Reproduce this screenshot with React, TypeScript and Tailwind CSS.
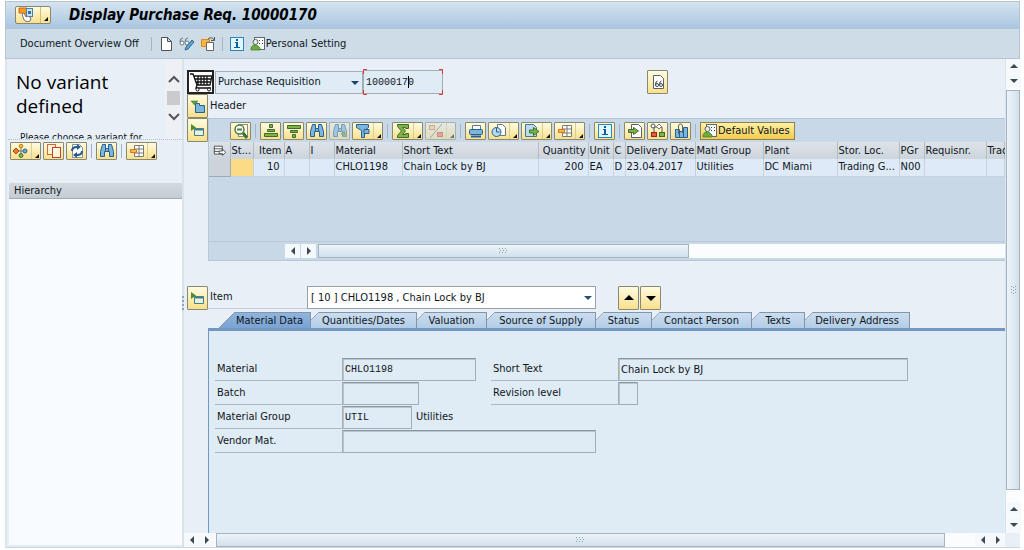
import React from "react";
import clsx from "clsx";

type IconName =
  | "session" | "page" | "glasses" | "copy" | "info" | "person" | "hier" | "dup" | "refresh" | "find" | "layout"
  | "cart" | "collapse" | "expand" | "doc" | "zoom" | "asc" | "desc" | "findNext" | "filter" | "sum" | "subtotal"
  | "print" | "views" | "export" | "assign" | "split" | "capacity" | "up" | "down" | "config";

const outline = { stroke: "#3e6b35", strokeWidth: 1, fill: "#7fb342" };
const blue = { stroke: "#27608f", strokeWidth: 1, fill: "#7cb6df" };

const binoculars = (
  <path {...blue} d="M3.500 1.500h3v4h3v-4h3l2 7v5h-4v-5h-5v5h-4v-5z M6.500 5.500v3M9.500 5.500v3" />
);

const icons: Record<IconName, React.ReactNode> = {
  session: (
    <>
      <path d="M1 1h8v4l-2 1v3l-3-3H1z" fill="#f39a1f" stroke="#c8641a" strokeWidth="1" />
      <rect x="8.500" y="1.500" width="6" height="8" fill="#cfe3f2" stroke="#4583ae" />
      <path d="M10 4h3v3h-3z" fill="#2774ad" />
      <path d="M4 7l2 6q3 3 6 1l1-3-3-2-2 1-2-4z" fill="#fff" stroke="#777" />
    </>
  ),
  page: <path d="M3.500 1.500h6l4 4v9h-10z M9.500 1.500v4h4" fill="#fff" stroke="#4d5357" />,
  glasses: (
    <>
      <path d="M1 6q0-4 3-4M6 6q0-4 3-4" fill="none" stroke="#68747b" />
      <circle cx="3" cy="7" r="2" fill="#fff" stroke="#68747b" />
      <circle cx="8" cy="7" r="2" fill="#fff" stroke="#68747b" />
      <path d="M6 14l1-3 6-7 2 2-6 7z" fill="#60a5d5" stroke="#2a6796" />
    </>
  ),
  copy: (
    <>
      <path d="M1.500 3.500h8v7h-8z" fill="#f6b63a" stroke="#e28919" />
      <path d="M6.500 6.500h7v8h-7z" fill="#fff" stroke="#666" />
      <path d="M8 3q4-3 6 1M14.500 1v3.500H11" fill="none" stroke="#555" />
    </>
  ),
  info: (
    <>
      <rect x="1.500" y="1.500" width="13" height="13" fill="#e5f5fd" stroke="#2388c4" />
      <path d="M7 3h2v2H7zM6 6h3v5h2v1H5v-1h2V7H6z" fill="#075f9c" />
    </>
  ),
  person: (
    <>
      <rect x="4.500" y="1.500" width="10" height="12" fill="#f8fafa" stroke="#60686c" />
      <path d="M9 4.500h1M12 4.500h1M9 7.500h1M12 7.500h1" stroke="#444" />
      <circle cx="5.500" cy="6" r="2.500" fill="#e9eee8" stroke="#586760" />
      <path d="M1 14v-2q1-3 4-3t5 3v2z" fill="#6fac3e" stroke="#397432" strokeWidth=".7" />
    </>
  ),
  hier: (
    <>
      <path d="M8 4v8M5 8h6" stroke="#777" />
      <path d="M3 5l3 3-3 3-3-3z" fill="#ed7a28" stroke="#a94616" />
      <circle cx="8" cy="3" r="1.800" fill="#f8c13c" stroke="#bd7b18" />
      <circle cx="12" cy="8" r="2" fill="#67a9d4" stroke="#28638f" />
      <circle cx="8" cy="12.500" r="2" fill="#83b64b" stroke="#437731" />
    </>
  ),
  dup: (
    <>
      <rect x="1.500" y="1.500" width="8" height="10" fill="#fff4d3" stroke="#d6673c" />
      <rect x="6.500" y="4.500" width="8" height="10" fill="#fff9dc" stroke="#c63e2c" />
    </>
  ),
  refresh: (
    <>
      <path d="M3.500 1.500h7l3 3v10h-10z" fill="#fff" stroke="#8a9297" />
      <path d="M3 8q0-4 5-4M13 8q0 4-5 4" fill="none" stroke="#245a93" strokeWidth="2" />
      <path d="M8 1l4 3-4 3zM8 9l-4 3 4 3z" fill="#245a93" />
    </>
  ),
  find: binoculars,
  findNext: (
    <>
      {binoculars}
      <path d="M9 11h6M12 8v6" stroke="#5c8a33" strokeWidth="2" />
    </>
  ),
  layout: (
    <>
      <path d="M5.500 2.500h9v11h-9zM5.500 6h9M5.500 10h9M10 2.500v11" fill="#fff" stroke="#777b75" />
      <path d="M1.500 6.500h6v3h-6z" fill="#f9b64e" stroke="#da7424" />
    </>
  ),
  cart: (
    <>
      <path d="M1 2h3l4 11h13l2-9H5M6 7h16M7 10h14M9 4v9M12 4v9M15 4v9M18 4v9M8 13l-1 3h15" fill="none" stroke="#111" strokeWidth="1.300" />
      <circle cx="8.500" cy="17.500" r="1.500" fill="#fff" stroke="#111" />
      <circle cx="20" cy="17.500" r="1.500" fill="#fff" stroke="#111" />
    </>
  ),
  collapse: (
    <>
      <path d="M5.500 5.500h4v2h5v7h-9z" {...blue} />
      <path d="M1 3h7L4.500 7z" fill="#5c9a35" stroke="#397432" strokeWidth=".5" />
    </>
  ),
  expand: (
    <>
      <path d="M4.500 6.500h9v7h-9z" fill="#e8f3dc" stroke="#467e8c" />
      <path d="M4 7.500h10" stroke="#467e8c" strokeWidth="2" />
      <path d="M1 2l5 3.500L1 9z" fill="#4e8d35" />
    </>
  ),
  doc: (
    <>
      <path d="M3.500 1.500h7l3 3v10h-10z" fill="#fff" stroke="#586167" />
      <path d="M5.500 11q0-4 2-4M9.500 11q0-4 2-4" fill="none" stroke="#40494e" />
      <circle cx="7" cy="11" r="1.500" fill="none" stroke="#40494e" />
      <circle cx="11" cy="11" r="1.500" fill="none" stroke="#40494e" />
    </>
  ),
  zoom: (
    <>
      <rect x="5.500" y="1.500" width="9" height="12" fill="#fffbe7" stroke="#86908a" />
      <path d="M10 10l4 5" stroke="#3d702c" strokeWidth="3" />
      <circle cx="6.500" cy="6.500" r="4.500" fill="#fff" stroke="#4c8136" strokeWidth="1.500" />
      <path d="M4 6.500h5" stroke="#567b55" strokeWidth="2" />
    </>
  ),
  asc: <path {...outline} d="M6.500 1.500h3v3h-3zM4.500 6.500h7v2h-7zM1.500 10.500h13v3h-13z" />,
  desc: <path {...outline} d="M1.500 2.500h13v3h-13zM4.500 7.500h7v2h-7zM6.500 11.500h3v3h-3z" />,
  filter: (
    <>
      <path {...blue} d="M1.500 1.500h12v3l-4 3v7h-3v-7l-5-3z" />
      <path d="M9 6.500h5v4H9z" {...blue} />
    </>
  ),
  sum: <path {...outline} d="M2.500 1.500h11v4h-3v-1h-3l3 3.500-3 3.500h3v-1h3v4h-11v-2l4-4.500-4-4.500z" />,
  subtotal: (
    <>
      <path d="M14 1L2 15" stroke="#777" />
      <rect x="1.500" y="2.500" width="5" height="4" fill="#fbd6a0" stroke="#e3732e" />
      <rect x="9.500" y="9.500" width="5" height="4" fill="#ef7a52" stroke="#c3452a" />
    </>
  ),
  print: (
    <>
      <path d="M4.500 2.500h8v4h-8z" fill="#fff" stroke="#557d97" />
      <rect x="1.500" y="6.500" width="13" height="5" rx="1" {...blue} />
      <path d="M3 13.500h10" stroke="#27608f" strokeWidth="2" />
    </>
  ),
  views: (
    <>
      <path d="M6.500 1.500h5l3 3v8h-8z" fill="#fff" stroke="#657783" />
      <circle cx="5.500" cy="9" r="4.500" fill="#b8d9ed" stroke="#27608f" />
      <path d="M5.500 5v4h3" fill="none" stroke="#27608f" />
    </>
  ),
  export: (
    <>
      <path d="M1.500 1.500h8l3 3v9h-11z" fill="#b9dcf1" stroke="#447493" />
      <path d="M5.500 7h4V4.500l5.500 4-5.500 4V10h-4z" fill="#79b245" stroke="#397432" />
    </>
  ),
  assign: (
    <>
      <path d="M4.500 1.500h7l3 3v10h-10z" fill="#fff" stroke="#586167" />
      <path d="M1.500 6.500h5v-2l5 3.500-5 3.500v-2h-5z" {...outline} />
    </>
  ),
  split: (
    <>
      <path d="M4 4h8v5M4 4v6" fill="none" stroke="#555" />
      <circle cx="3" cy="3" r="2" fill="#fff" stroke="#555" />
      <path d="M9 1l2.500 2.500L9 6 6.500 3.500z" fill="#fff" stroke="#777" />
      <rect x="1.500" y="9.500" width="5" height="4" fill="#e35b39" stroke="#922b1a" />
      <rect x="9.500" y="9.500" width="5" height="4" {...outline} />
    </>
  ),
  capacity: (
    <>
      <path d="M2.500 6.500h4v8h-4zM6.500 8.500h4v6h-4zM10.500 4.500h4v10h-4z" {...blue} />
      <path d="M5.500 11V3q0-2 2-2t2 2v7" fill="none" stroke="#666" />
    </>
  ),
  up: <path d="M3 10h10L8 5z" fill="#000" />,
  down: <path d="M3 6h10l-5 5z" fill="#000" />,
  config: (
    <>
      <path d="M1.500 2.500h9v9h-9zM1.500 5.500h9M1.500 8.500h9" fill="#fff" stroke="#3c4348" />
      <path d="M7 8h4V6l3.500 3.500L11 13v-2H7z" fill="#fff" stroke="#3c4348" />
    </>
  ),
};

function Icon({ name, className = "size-4" }: { name: IconName; className?: string }) {
  return (
    <svg viewBox={name === "cart" ? "0 0 24 20" : "0 0 16 16"} className={clsx("shrink-0", className)} aria-hidden="true">
      {icons[name]}
    </svg>
  );
}

const yellow = "border border-[#8b8870] bg-linear-to-b from-[#fffbe0] to-[#f8e08a]";

function ToolButton({ icon, label, menu, disabled, tall }: { icon: IconName; label: string; menu?: boolean; disabled?: boolean; tall?: boolean }) {
  return (
    <button
      type="button"
      aria-label={label}
      disabled={disabled}
      className={clsx("flex shrink-0 items-center rounded-[1px]", yellow, menu ? "w-[31px] pl-0.5" : "w-[21px] justify-center", tall ? "h-6" : "h-[18px]", disabled && "opacity-50")}
    >
      <Icon name={icon} />
      {menu && (
        <span className="ml-0.5 flex h-full flex-1 items-end justify-end border-l border-[#d9cd93] p-px">
          <svg viewBox="0 0 4 4" className="size-1" aria-hidden="true"><path d="M4 0v4H0z" fill="#111" /></svg>
        </span>
      )}
    </button>
  );
}

function Sep({ className = "mx-0.5" }: { className?: string }) {
  return <span className={clsx("h-3.5 w-px shrink-0 bg-[#a3b5c4]", className)} />;
}

function Arrow({ dir, className }: { dir: "left" | "right" | "up" | "down"; className?: string }) {
  const d = { left: "M7 1v8L3 5z", right: "M3 1v8l4-4z", up: "M1 7h8L5 3z", down: "M1 3h8L5 7z" }[dir];
  return (
    <button type="button" aria-label={"Scroll " + dir} className={clsx("flex shrink-0 items-center justify-center bg-[#f6f9fc]", className ?? "h-3.5 w-[15px]")}>
      <svg viewBox="0 0 10 10" className="size-2.5" aria-hidden="true"><path d={d} fill="#3d4a55" /></svg>
    </button>
  );
}

function Grip({ vertical }: { vertical?: boolean }) {
  return (
    <svg viewBox="0 0 8 6" className={clsx("h-1.5 w-2", vertical && "rotate-90")} aria-hidden="true">
      <path d="M0 .5h8M1 2.500h8M0 4.500h8" stroke="#8fa0b0" strokeDasharray="1 2" />
    </svg>
  );
}

const columns = [
  { head: "", value: "", w: "w-[21px]" },
  { head: "St...", value: "", w: "w-[23px]" },
  { head: "Item", value: "10", w: "w-[31px]", right: true },
  { head: "A", value: "", w: "w-[25px]" },
  { head: "I", value: "", w: "w-[25px]" },
  { head: "Material", value: "CHLO1198", w: "w-[68px]" },
  { head: "Short Text", value: "Chain Lock by BJ", w: "w-[136px]" },
  { head: "Quantity", value: "200", w: "w-[50px]", right: true },
  { head: "Unit", value: "EA", w: "w-[25px]" },
  { head: "C", value: "D", w: "w-[12px]" },
  { head: "Delivery Date", value: "23.04.2017", w: "w-[70px]" },
  { head: "Matl Group", value: "Utilities", w: "w-[68px]" },
  { head: "Plant", value: "DC Miami", w: "w-[74px]" },
  { head: "Stor. Loc.", value: "Trading G...", w: "w-[62px]" },
  { head: "PGr", value: "N00", w: "w-[25px]" },
  { head: "Requisnr.", value: "", w: "w-[62px]" },
  { head: "Trac", value: "", w: "w-auto" },
];

const tabs = [
  { label: "Material Data", w: "w-[92px]" },
  { label: "Quantities/Dates", w: "w-[106px]" },
  { label: "Valuation", w: "w-[70px]" },
  { label: "Source of Supply", w: "w-[109px]" },
  { label: "Status", w: "w-[56px]" },
  { label: "Contact Person", w: "w-[100px]" },
  { label: "Texts", w: "w-[53px]" },
  { label: "Delivery Address", w: "w-[105px]" },
];

function Tab({ label, w, active }: { label: string; w: string; active: boolean }) {
  return (
    <button type="button" role="tab" aria-selected={active} className={clsx("flex h-4 shrink-0 whitespace-nowrap", w)}>
      <svg viewBox="0 0 16 16" preserveAspectRatio="none" className={clsx("h-4 shrink-0", active ? "w-4" : "w-2")} aria-hidden="true">
        <defs>
          <linearGradient id={active ? "edgeOn" : "edgeOff"} x2="0" y2="1">
            <stop stopColor={active ? "#8fb3dc" : "#cbddef"} />
            <stop offset="1" stopColor={active ? "#7ba3d2" : "#b3cde7"} />
          </linearGradient>
        </defs>
        <path d={active ? "M0 16L16 0v16z" : "M0 16V8L16 0v16z"} fill={active ? "url(#edgeOn)" : "url(#edgeOff)"} />
        <path d={active ? "M0 16L16 0" : "M0 8L16 0"} stroke="#8296ab" />
      </svg>
      <span
        className={clsx(
          "flex h-4 flex-1 items-center justify-center border-t border-r border-[#8296ab] bg-linear-to-b",
          active ? "from-[#8fb3dc] to-[#7ba3d2] pr-1.5" : "from-[#cbddef] to-[#b3cde7] pr-2",
        )}
      >
        {label}
      </span>
    </button>
  );
}

function Field({ id, label, value = "", w, mono, after, span }: { id: string; label: string; value?: string; w: string; mono?: boolean; after?: string; span?: boolean }) {
  return (
    <>
      <label htmlFor={id} className="flex h-6 items-center border-b border-[#a9b8c4] pl-0.5">{label}</label>
      <div className={clsx("flex h-6 items-center", span && "col-span-3")}>
        <input
          id={id}
          readOnly
          defaultValue={value}
          className={clsx("h-[23px] border border-[#a3adb5] border-t-[#8d979f] bg-[#dfebf5] px-0.5 shadow-[inset_1px_1px_0_#b9c4cc] outline-none", w, mono && "font-['Liberation_Mono',monospace] text-[10px]")}
        />
        {after && <span className="ml-1">{after}</span>}
      </div>
    </>
  );
}

export default function App() {
  return (
    <div className="flex min-h-screen flex-col bg-white pt-px pr-1 pb-0.5 pl-[5px] font-['DejaVu_Sans_Condensed','DejaVu_Sans',sans-serif] text-[11px] leading-4 text-[#10161c]">
      <header className="flex h-7 shrink-0 items-center gap-[18px] border border-[#b3c4d4] bg-linear-to-b from-[#d5e3ef] to-[#aac7e1] pl-[9px]">
        <button type="button" aria-label="Session menu" className={clsx("flex h-[18px] w-9 items-center rounded-[2px] pl-0.5", yellow)}>
          <Icon name="session" />
          <span className="ml-1.5 flex h-full flex-1 items-end justify-end border-l border-[#cfc079] p-0.5">
            <svg viewBox="0 0 4 4" className="size-1" aria-hidden="true"><path d="M4 0v4H0z" fill="#111" /></svg>
          </span>
        </button>
        <h1 className="text-[15px] leading-5 font-bold text-black italic">Display Purchase Req. 10000170</h1>
      </header>

      <div className="flex h-[30px] shrink-0 items-center gap-[5px] border-x border-b border-[#b3c4d4] bg-[#cddce7] pl-3.5">
        <button type="button" className="mr-1.5">Document Overview Off</button>
        <Sep className="mx-px" />
        <button type="button" aria-label="Create"><Icon name="page" /></button>
        <button type="button" aria-label="Display/Change"><Icon name="glasses" /></button>
        <button type="button" aria-label="Other Purchase Requisition"><Icon name="copy" /></button>
        <Sep className="mx-px" />
        <button type="button" aria-label="Help"><Icon name="info" /></button>
        <button type="button" className="flex items-center"><Icon name="person" />Personal Setting</button>
      </div>

      <div className="flex flex-1 border-b border-[#ccd5de] bg-[#e8eff7]">
        <aside className="flex w-[177px] shrink-0 flex-col border-l-2 border-[#dde5ec] pl-px">
          <div className="flex h-[81px] border-b border-dotted border-[#b6c2cc]">
            <div className="flex-1 overflow-hidden pt-[11px] pl-2">
              <h2 className="font-['Open_Sans',sans-serif] text-[19px] leading-6 text-black">No variant defined</h2>
              <p className="pt-3 pl-1 text-[10px] whitespace-nowrap">Please choose a variant for</p>
            </div>
            <div className="flex w-[17px] flex-col items-center bg-[#edf1f5] pt-4">
              <svg viewBox="0 0 12 8" className="h-2 w-3" aria-hidden="true"><path d="M1 7l5-5 5 5" fill="none" stroke="#555" strokeWidth="2" /></svg>
              <span className="my-2 h-3.5 w-[13px] bg-[#cbcbcd]" />
              <svg viewBox="0 0 12 8" className="h-2 w-3" aria-hidden="true"><path d="M1 1l5 5 5-5" fill="none" stroke="#555" strokeWidth="2" /></svg>
            </div>
          </div>
          <div className="flex h-[43px] items-start gap-0.5 pt-0.5 pl-0.5">
            <ToolButton icon="hier" label="Select variant" menu />
            <ToolButton icon="dup" label="Copy" />
            <ToolButton icon="refresh" label="Refresh" />
            <Sep className="mx-0.5 mt-0.5" />
            <ToolButton icon="find" label="Find" />
            <Sep className="mx-0.5 mt-0.5" />
            <ToolButton icon="layout" label="Change layout" menu />
          </div>
          <div className="ml-px h-4 border-b border-[#9faab4] bg-linear-to-b from-[#d2d9df] to-[#c5cdd4] pl-[5px]">Hierarchy</div>
          <div className="ml-px flex-1 border-b-2 border-[#e3eaf0] bg-[#f8fbff]" />
        </aside>
        <div className="flex w-0.5 shrink-0 items-center bg-[#dbe3ea]">
          <span className="h-3.5 border-l-2 border-dotted border-[#8fa0b0]" />
        </div>

        <div className="flex min-w-0 flex-1 flex-col">
          <div className="flex flex-1">
            <main className="flex min-w-0 flex-1 flex-col pt-[11px]">
              <div className="flex h-6 items-center pl-[3px]">
                <button type="button" aria-label="Shop" className="flex h-6 w-[27px] items-center justify-center border-2 border-[#222] bg-white"><Icon name="cart" className="h-5 w-6" /></button>
                <div className="relative ml-px">
                  <select aria-label="Document type" className="block h-[23px] w-[148px] appearance-none border border-[#a3adb5] bg-[#dfebf5] pl-0.5 outline-none">
                    <option>Purchase Requisition</option>
                  </select>
                  <svg viewBox="0 0 8 4" className="pointer-events-none absolute top-2.5 right-1 h-1 w-2" aria-hidden="true"><path d="M0 0h8L4 4z" fill="#20406a" /></svg>
                </div>
                <div className="relative">
                  <input aria-label="Requisition number" readOnly defaultValue="10000170" className="block h-6 w-20 border border-[#a3adb5] bg-[#dfebf5] pl-0.5 font-['Liberation_Mono',monospace] text-[10px] outline-none" />
                  <svg viewBox="0 0 80 26" preserveAspectRatio="none" className="pointer-events-none absolute -top-px left-0 h-[26px] w-20" aria-hidden="true">
                    <path d="M4 .5H.5V5M76 .5h3.500V5M4 25.500H.5V21M76 25.500h3.500V21" fill="none" stroke="#e2352f" />
                    <path d="M45.500 7v12" stroke="#000" />
                  </svg>
                </div>
                <div className="ml-[204px]"><ToolButton icon="doc" label="Services" tall /></div>
              </div>
              <div className="flex h-6 items-center gap-0.5 pl-[3px]">
                <ToolButton icon="collapse" label="Expand header" tall />
                <span>Header</span>
              </div>

              <div className="flex items-start pl-[3px]">
                <ToolButton icon="expand" label="Collapse item overview" tall />
                <section className="min-w-0 flex-1 overflow-hidden border-y border-l border-[#b5c7d8] bg-[#c8d8e7]">
                  <div className="flex h-[23px] items-center gap-0.5 pl-[21px]">
                    <ToolButton icon="zoom" label="Details" />
                    <Sep />
                    <ToolButton icon="asc" label="Sort ascending" />
                    <ToolButton icon="desc" label="Sort descending" />
                    <ToolButton icon="find" label="Find" />
                    <ToolButton icon="findNext" label="Find next" disabled />
                    <ToolButton icon="filter" label="Filter" menu />
                    <Sep />
                    <ToolButton icon="sum" label="Total" menu />
                    <ToolButton icon="subtotal" label="Subtotal" menu disabled />
                    <Sep />
                    <ToolButton icon="print" label="Print" />
                    <ToolButton icon="views" label="Views" menu />
                    <ToolButton icon="export" label="Export" menu />
                    <ToolButton icon="layout" label="Change layout" menu />
                    <Sep />
                    <ToolButton icon="info" label="Information" />
                    <Sep />
                    <ToolButton icon="assign" label="Assign source" />
                    <ToolButton icon="split" label="Release" />
                    <ToolButton icon="capacity" label="Stock" />
                    <Sep />
                    <button type="button" className="flex h-[18px] items-center border border-[#8b8050] bg-linear-to-b from-[#fff0a0] to-[#f3cb4c] pr-1 pl-px whitespace-nowrap"><Icon name="person" />Default Values</button>
                  </div>
                  <div className="h-[99px]">
                    <table className="w-full table-fixed border-collapse">
                      <thead>
                        <tr className="h-[17px] bg-linear-to-b from-[#dde3e8] to-[#ccd4dc]">
                          {columns.map((c, i) => (
                            <th key={i} scope="col" className={clsx("h-[17px] border-r border-[#b0bcc8] py-0 font-normal whitespace-nowrap", c.w, c.right ? "pr-0.5 text-right" : "pl-px text-left")}>
                              {i === 0 ? <Icon name="config" className="mx-auto size-3.5" /> : c.head}
                            </th>
                          ))}
                        </tr>
                      </thead>
                      <tbody>
                        <tr className="bg-[#deeaf7]">
                          {columns.map((c, i) => (
                            <td
                              key={i}
                              className={clsx(
                                "h-[17px] overflow-hidden border-r border-b py-0 whitespace-nowrap",
                                c.right ? "pr-1 text-right" : "pl-px",
                                i === 0 ? "border-[#9faab4] bg-[#ccd3da]" : "border-[#c5d3e0]",
                                i === 1 && "bg-[#fbdb85]",
                              )}
                            >
                              {c.value}
                            </td>
                          ))}
                        </tr>
                      </tbody>
                    </table>
                  </div>
                  <div className="flex h-[19px] items-center border-t border-[#b9c9d8] pl-[76px]">
                    <Arrow dir="left" />
                    <Arrow dir="right" className="ml-px h-3.5 w-[15px]" />
                    <div className="ml-0.5 flex h-3.5 flex-1 bg-[#fbfcfd]">
                      <div className="flex w-[54%] items-center justify-center border border-[#a5b4c2] bg-linear-to-b from-[#edf4fa] to-[#d2e0ec]"><Grip /></div>
                    </div>
                  </div>
                </section>
              </div>

              <div className="mt-6 flex h-[25px] items-center pl-[3px]">
                <ToolButton icon="expand" label="Collapse item" tall />
                <label htmlFor="item" className="flex h-[23px] w-[99px] items-center border-b border-[#c3ced8] pl-0.5">Item</label>
                <div className="relative">
                  <select id="item" className="block h-[23px] w-[289px] appearance-none border border-[#98a2aa] bg-white pl-[3px] outline-none">
                    <option>[ 10 ] CHLO1198 , Chain Lock by BJ</option>
                  </select>
                  <svg viewBox="0 0 8 4" className="pointer-events-none absolute top-2.5 right-1 h-1 w-2" aria-hidden="true"><path d="M0 0h8L4 4z" fill="#28506e" /></svg>
                </div>
                <div className="ml-[22px] flex gap-px">
                  <ToolButton icon="up" label="Previous item" tall />
                  <ToolButton icon="down" label="Next item" tall />
                </div>
              </div>

              <div role="tablist" className="mt-0.5 ml-6 flex h-4 shrink-0 pl-[11px]">
                {tabs.map((t, i) => (
                  <Tab key={t.label} label={t.label} w={t.w} active={i === 0} />
                ))}
              </div>
              <section className="ml-6 flex-1 border-t-[3px] border-l border-[#7298c2] bg-[#dfebf5] pt-[26px] pl-1.5">
                <div className="grid grid-cols-[127px_149px_127px_minmax(0,290px)]">
                  <Field id="material" label="Material" value="CHLO1198" w="w-[134px]" mono />
                  <Field id="shortText" label="Short Text" value="Chain Lock by BJ" w="w-[290px]" />
                  <Field id="batch" label="Batch" w="w-[77px]" />
                  <Field id="revision" label="Revision level" w="w-5" />
                  <Field id="group" label="Material Group" value="UTIL" w="w-[70px]" mono after="Utilities" span />
                  <Field id="vendor" label="Vendor Mat." w="w-[254px]" span />
                </div>
              </section>
            </main>

            <div className="flex w-[15px] shrink-0 flex-col border-l border-[#dce4eb] bg-[#fbfcfd]">
              <Arrow dir="up" />
              <Arrow dir="down" className="mt-px h-3.5 w-[15px]" />
              <div className="mt-0.5 flex flex-1 items-center justify-center border border-[#a5b4c2] bg-linear-to-r from-[#edf4fa] to-[#d2e0ec]"><Grip vertical /></div>
              <Arrow dir="up" className="mt-3 h-3.5 w-[15px]" />
              <Arrow dir="down" className="mt-px h-4 w-[15px]" />
            </div>
          </div>

          <div className="flex h-3.5 shrink-0 bg-[#fbfcfd]">
            <Arrow dir="left" />
            <Arrow dir="right" />
            <div className="ml-0.5 flex flex-1">
              <div className="flex w-[96%] items-center justify-center border border-[#a5b4c2] bg-linear-to-b from-[#edf4fa] to-[#d2e0ec]"><Grip /></div>
            </div>
            <Arrow dir="left" />
            <Arrow dir="right" />
            <span className="w-[15px] bg-[#e8eff7]" />
          </div>
        </div>
      </div>
    </div>
  );
}
